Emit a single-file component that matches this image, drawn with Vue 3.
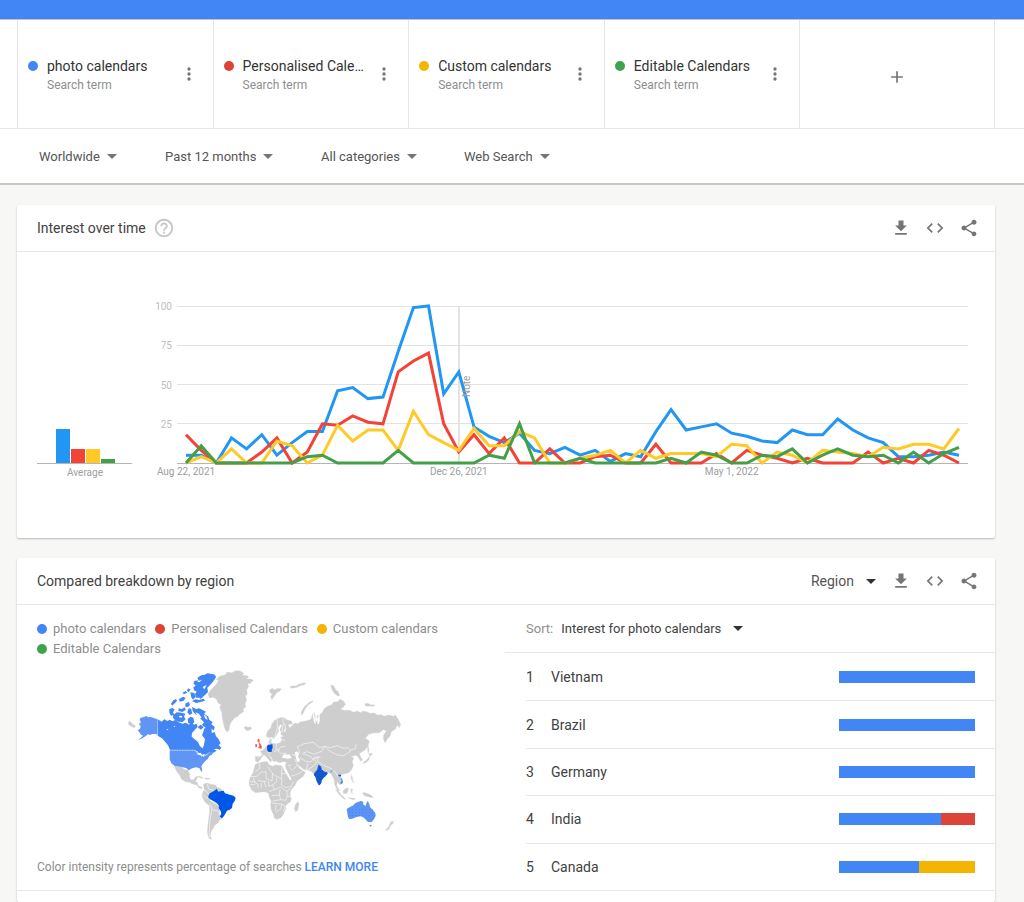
<script setup>
const terms = [
  { name: 'photo calendars', color: '#4285f4' },
  { name: 'Personalised Calendars', short: 'Personalised Cale…', color: '#db4437' },
  { name: 'Custom calendars', color: '#f4b400' },
  { name: 'Editable Calendars', color: '#3fa34d' }
]

const filters = [
  { label: 'Location', options: ['Worldwide', 'United States', 'India'] },
  { label: 'Time range', options: ['Past 12 months', 'Past 30 days', 'Past 5 years'] },
  { label: 'Category', options: ['All categories', 'Shopping', 'Travel'] },
  { label: 'Search type', options: ['Web Search', 'Image Search', 'News Search'] }
]

const baseline = 210
const unit = 157 / 100
const startX = 169
const weekStep = 773 / 51

const series = [
  { color: '#2196f3', values: [5, 5, 0, 16, 9, 18, 5, 13, 20, 20, 46, 48, 41, 42, 71, 99, 100, 44, 58, 23, 17, 13, 19, 8, 6, 10, 5, 8, 1, 6, 4, 20, 34, 21, 23, 25, 19, 17, 14, 13, 21, 18, 18, 28, 21, 16, 13, 4, 4, 5, 7, 5] },
  { color: '#f44336', values: [18, 8, 0, 0, 0, 7, 16, 0, 7, 25, 24, 30, 26, 25, 58, 65, 70, 25, 7, 18, 6, 16, 0, 0, 9, 0, 0, 4, 5, 0, 0, 12, 0, 0, 0, 6, 0, 8, 5, 3, 0, 3, 0, 0, 0, 7, 0, 3, 0, 8, 5, 0] },
  { color: '#ffca28', values: [0, 4, 0, 9, 0, 0, 14, 11, 0, 5, 24, 14, 21, 21, 8, 33, 18, 13, 8, 22, 11, 11, 20, 16, 0, 0, 3, 5, 8, 0, 8, 3, 6, 6, 6, 4, 12, 11, 0, 7, 5, 0, 8, 7, 6, 4, 10, 9, 12, 12, 9, 22] },
  { color: '#43a047', values: [0, 11, 0, 0, 0, 0, 0, 0, 4, 5, 0, 0, 0, 0, 8, 0, 0, 0, 0, 0, 5, 3, 25, 0, 0, 0, 3, 0, 0, 0, 0, 0, 3, 0, 7, 5, 0, 0, 5, 4, 9, 0, 5, 9, 5, 4, 5, 0, 7, 0, 6, 10] }
]

const linePoints = (values) =>
  values.map((v, i) => `${(startX + i * weekStep).toFixed(1)},${(baseline - v * unit).toFixed(1)}`).join(' ')

const gridValues = [25, 50, 75, 100]
const averages = [34, 14, 14, 4]
const dateTicks = [
  { week: 0, text: 'Aug 22, 2021' },
  { week: 18, text: 'Dec 26, 2021' },
  { week: 36, text: 'May 1, 2022' }
]

const regions = [
  { name: 'Vietnam', parts: [{ c: '#4285f4', w: 100 }] },
  { name: 'Brazil', parts: [{ c: '#4285f4', w: 100 }] },
  { name: 'Germany', parts: [{ c: '#4285f4', w: 100 }] },
  { name: 'India', parts: [{ c: '#4285f4', w: 75 }, { c: '#db4437', w: 25 }] },
  { name: 'Canada', parts: [{ c: '#4285f4', w: 59 }, { c: '#f4b400', w: 41 }] }
]

const actions = [
  { label: 'Download CSV', d: 'M19 9h-4V3H9v6H5l7 7 7-7zM5 18v2h14v-2H5z' },
  { label: 'Embed', d: 'M9.4 16.6L4.8 12l4.6-4.6L8 6l-6 6 6 6 1.4-1.4zm5.2 0l4.6-4.6-4.6-4.6L16 6l6 6-6 6-1.4-1.4z' },
  { label: 'Share', d: 'M18 16.08c-.76 0-1.44.3-1.96.77L8.91 12.7c.05-.23.09-.46.09-.7s-.04-.47-.09-.7l7.05-4.11c.54.5 1.25.81 2.04.81 1.66 0 3-1.34 3-3s-1.34-3-3-3-3 1.34-3 3c0 .24.04.47.09.7L8.04 9.81C7.5 9.31 6.79 9 6 9c-1.66 0-3 1.34-3 3s1.34 3 3 3c.79 0 1.5-.31 2.04-.81l7.12 4.16c-.05.21-.08.43-.08.65 0 1.61 1.31 2.92 2.92 2.92 1.61 0 2.92-1.31 2.92-2.92s-1.31-2.92-2.92-2.92z' }
]

const land = {
  greenland: 'M264 105l10-14 14-14 8-14-8-2 12-10 16-4 6-8 14 2 10-6 12 0 8 4 6 5-6 4 16 2 4 5-8 5 14 0 8 4-8 8-9 3 3 8-6 10 2 12-6 6 4 12-5 12 3 8-9 8 3 6-12 8-8 8-8 3-8 10-6 10-3 16-4 7-6-4-5-14-4-18-2-12-1-12-6-14 4-8-10-6-3-10-10-6-12 2z',
  iceland: 'M373 204l5-2 4 3 10-1 3 4-5 5-8 2-7-4z',
  mexico: 'M163 322l22 2 8 8 10 0 6 14 0 10 4 6 8 0 5-8 6 0-3 10-4 5 7 0 2 10 8 5 6 2-4 3-8-3-6-8-14-4-8-4-12-2-12-8-4-10-10-13-4-8zM227 353l13-1 10 5-3 1-10-3zM253 357l15 1 2 3-12 0z',
  southAmerica: 'M250 375l12-3 10 4 14 2 5 7 12 4 4 5-6 8-20 6-14 8 4 10 20 8 8 22-2 12 12 3-4 10-7 3-4 8-10 7-4 8-6 8-2 7-1 10 4 9-7-2-4-9-2-12 2-20 2-20 3-20-1-18-14-12-8-17 2-10 5-10z',
  africa: 'M406 316l12-5 14-3 12 0 1 8 12 6 9-4 20 2 7 16 10 16 7 12 16-3 6 3-7 15-12 14-3 12 4 14-2 8-14 12-1 12-8 16-6 9-12 5-7-3-4-12-7-15-1-16 2-8-6-12-2-12-10-4-12 0-18 2-10-7-8-14-1-12 4-14 8-12z',
  madagascar: 'M534 428l3 6-4 20-6 4-4-8 3-13z',
  eurasia: 'M406 292L424 292 426 284 420 277 429 274 436 266 444 256 450 256 446 248 452 246 456 253 470 254 482 250 486 242 482 234 492 232 484 228 482 222 490 216 496 220 498 206 494 192 500 182 514 186 518 194 504 197 509 206 518 198 524 192 534 194 540 189 552 187 566 184 574 179 576 168 582 160 586 172 585 184 592 190 594 180 590 170 598 168 607 160 612 150 622 142 634 138 640 130 656 127 658 121 666 123 673 129 676 137 668 146 660 150 672 154 690 154 700 160 712 156 722 161 728 156 740 158 750 163 762 162 772 168 784 167 792 172 806 168 820 172 826 168 834 180 842 196 838 206 832 198 826 210 814 218 810 232 802 240 795 251 790 240 791 228 800 215 790 212 778 221 760 222 746 226 736 238 748 246 744 262 734 274 724 280 718 284 722 294 728 303 722 307 716 296 708 288 700 292 692 290 701 298 697 308 700 320 694 334 684 342 674 344 664 347 660 353 668 363 668 374 659 377 652 367 650 380 660 396 652 392 644 377 642 360 634 346 628 340 618 344 608 352 602 366 596 376 590 366 584 350 577 340 568 334 552 332 542 324 530 318 540 329 549 335 556 340 550 352 534 364 520 371 514 360 506 344 498 328 496 318 500 310 490 308 478 311 468 306 460 308 455 296 446 288 440 283 448 292 456 302 452 310 442 297 433 288 426 293 420 303 413 310 406 307z',
  scandinavia: 'M439 228L443 216 452 208 456 194 464 184 476 178 487 175 497 179 500 186 492 195 496 206 491 216 482 218 480 210 486 200 481 196 474 207 476 216 470 228 461 240 456 234 448 236 441 234zM449 240L454 239 454 246 449 248z',
  arctic: 'M448 92l10-4 4 5 12-5 10 2-5 7-8 3-8 12-7 10-4-8 4-8-6-6zM543 167l2-11 9-14 14-12 10-5 1 3-15 10-9 13-7 15zM510 83l8-3 10 2 8-6 10-3 12-1-5 5-13 3-8 5-9 1-9 2zM632 78l9 2 6 12 8 6 4 12-6 1-10-8-7-11zM733 135l10-2 9 4 13 1-3 4-12-1-11 1zM25 190l5-3 6 6 10 8-2 6-11-5-7-5z',
  asiaIslands: 'M646 391l7 3 11 13 11 11 1 4-7-4-12-12zM670 395l10-9 6 3-2 7-5 9-10-3zM692 389l6 2-2 7 2 8-4-6zM683 416l14 1 10 3-8 2zM730 400l11 3 13 6 6 7-8-1-8-2-11-3-5-6zM694 347l3 8 2 12 5 4-6-3-5-10zM742 257l4 9 1 18-4-9zM747 285l8-3 2 5-8 5zM748 292l0 8-7 9-11 5 0-4 10-7zM812 488l9-1-3 8-6 4-4 9-7 7-4-3 9-9z'
}
const borders = 'M388 352l20 1 16-14 14-1M418 311l2 16-14 12M438 338l0 20 18 8 2-22-14-20M456 344l28 16 2-40M400 356l4 14 10 6 0 12M414 364l18 4 8-2M424 372l0 16M432 368l6 16M446 366l0 16 12-4 12-10 0-10M484 344l22 0M486 360l-2 18 14 8 16-4 6-14M458 378l4 14-14 6M462 392l22-8M480 392l-2 16-22 2M484 386l16 10 14-8M500 396l2 14 14 6M478 408l4 14-24 4M482 422l16 2 4-14M456 432l30 4 10 6 14-3M468 438l-2 18M486 436l-4 14-14 10M496 442l-6 14 8 6M388 368l18 0M391 377l14-1M496 262l-14 2-8 12 10 8 12-2 12 10M454 262l0 18M440 276l12 10M470 250l-2 20 10 4M462 278l10-4M424 284l10 8M410 293l10 2M471 180l2 22-5 20-6 16M488 177l2 18-4 24M486 232l-10 4M484 244l-14 0M480 240l16 4M516 286l12 4 12-10-8-16 20-10 28-4 18 16 16-4M614 262l-8 14-24 10-20-8-12 4M614 262l14 14 24 12 20 2 20-14-8-10-14 2-18-8-20 6zM692 272l14-2 2-14M548 284l22 8 18 16M540 296l18 12 16 0 8-12 14-4M524 300l8 16-10 14M532 316l18 16M564 312l-6 22M560 334l22-14 10-12M596 292l-4 14M592 306l20 14 24 10M508 326l12 10M512 352l20-6 16-10M636 334l10 4 6 14M504 320l10-2M582 300l20-6'

const indiaShape = 'M596 319l6 4 2 9 9 7 9 3-5 8-8 7-5 8-2 9-5 4-6-12-3-12-5-6 2-7 8-9z'
const dots = Array.from({ length: 24 }, (_, n) => ({ x: 688 + (n % 8) * 10, y: 452 + Math.floor(n / 8) * 9 }))
</script>

<template>
  <div class="page">
    <div class="topbar"></div>

    <header class="query">
      <div class="terms">
        <div v-for="t in terms" :key="t.name" class="term">
          <span class="dot term-dot" :style="{ background: t.color }"></span>
          <div class="term-text">
            <div class="term-name" :title="t.name">{{ t.short || t.name }}</div>
            <div class="term-type">Search term</div>
          </div>
          <button class="icon-button" type="button" :aria-label="'Options for ' + t.name">
            <svg class="icon" viewBox="0 0 24 24"><circle cx="12" cy="6" r="2" /><circle cx="12" cy="12" r="2" /><circle cx="12" cy="18" r="2" /></svg>
          </button>
        </div>
        <div class="term add">
          <button class="icon-button" type="button" aria-label="Add comparison">
            <svg class="icon" viewBox="0 0 24 24"><path d="M19 13h-6v6h-2v-6H5v-2h6V5h2v6h6v2z" /></svg>
          </button>
        </div>
      </div>
      <div class="filters">
        <div v-for="f in filters" :key="f.label" class="dropdown">
          <select :aria-label="f.label">
            <option v-for="o in f.options" :key="o">{{ o }}</option>
          </select>
          <svg class="caret" viewBox="0 0 10 5"><path d="M0 0h10L5 5z" /></svg>
        </div>
      </div>
    </header>

    <main class="content">
      <section class="card">
        <div class="card-head">
          <h2>Interest over time</h2>
          <button class="help" type="button" aria-label="Help">
            <svg viewBox="0 0 24 24"><path d="M11 18h2v-2h-2v2zm1-16C6.48 2 2 6.48 2 12s4.48 10 10 10 10-4.48 10-10S17.52 2 12 2zm0 18c-4.41 0-8-3.59-8-8s3.59-8 8-8 8 3.59 8 8-3.59 8-8 8zm0-14c-2.21 0-4 1.79-4 4h2c0-1.1.9-2 2-2s2 .9 2 2c0 2-3 1.75-3 5h2c0-2.25 3-2.5 3-5 0-2.21-1.79-4-4-4z" /></svg>
          </button>
          <div class="actions">
            <button v-for="a in actions" :key="a.label" class="action" type="button" :aria-label="a.label">
              <svg class="icon" viewBox="0 0 24 24"><path :d="a.d" /></svg>
            </button>
          </div>
        </div>
        <svg class="chart" viewBox="0 -1 978 286" role="img" aria-label="Interest over time">
          <rect v-for="(h, i) in averages" :key="'a' + i" :x="39 + i * 15" :y="baseline - h" width="14" :height="h" :fill="series[i].color" />
          <path class="axis" d="M20 210.5H115" />
          <text x="68" y="223" text-anchor="middle">Average</text>
          <g v-for="g in gridValues" :key="g">
            <path class="grid" :d="`M160 ${Math.floor(baseline - g * unit) + 0.5}H951`" />
            <text class="tick" x="155" :y="baseline - g * unit + 4" text-anchor="end">{{ g }}</text>
          </g>
          <path class="axis" d="M160 210.5H951" />
          <path class="note-line" d="M442 53V210" />
          <polyline v-for="s in series" :key="s.color" :points="linePoints(s.values)" :stroke="s.color" class="line" />
          <text transform="translate(453 144) rotate(-90)">Note</text>
          <text v-for="d in dateTicks" :key="d.text" :x="startX + d.week * weekStep" y="222" text-anchor="middle">{{ d.text }}</text>
        </svg>
      </section>

      <section class="card last">
        <div class="card-head">
          <h2>Compared breakdown by region</h2>
          <div class="actions">
            <div class="dropdown region">
              <select aria-label="Resolution">
                <option>Region</option>
                <option>City</option>
              </select>
              <svg class="caret" viewBox="0 0 10 5"><path d="M0 0h10L5 5z" /></svg>
            </div>
            <button v-for="a in actions" :key="a.label" class="action" type="button" :aria-label="a.label">
              <svg class="icon" viewBox="0 0 24 24"><path :d="a.d" /></svg>
            </button>
          </div>
        </div>
        <div class="breakdown">
          <div class="map-pane">
            <ul class="legend">
              <li v-for="t in terms" :key="t.name"><span class="dot" :style="{ background: t.color }"></span>{{ t.name }}</li>
            </ul>
            <svg class="map" viewBox="-24 0 894 570" role="img" aria-label="World map of interest by region">
              <defs>
                <pattern id="dots" width="8" height="8" patternUnits="userSpaceOnUse">
                  <circle cx="2" cy="2" r="2" fill="#063a9e" /><circle cx="6" cy="6" r="2" fill="#063a9e" />
                </pattern>
              </defs>
              <g fill="#cdcecd" stroke="#d5d6d5" stroke-width="1">
                <path v-for="(d, k) in land" :key="k" :d="d" />
              </g>
              <g fill="#fff">
                <path d="M486 296l3-9 7-2 5 3 7-2 3 4 4 7-12 2-8-1zM524 280l8-3 5 8-3 8 6 9-3 8-7-4-3-13z" />
                <path d="M578 170l4-12 2 20 4 16-5-2zM596 166l3 1 0 22-5 8-2-5z" />
              </g>
              <path :d="borders" fill="none" stroke="#f7f7f7" stroke-width="2" />
              <path d="M247 392l12 4 8 10M262 374l4 16 14 4M250 408l10 10 8-6M272 422l8 10 14 4M270 434l6 18 18 4 8 14M276 452l-6 30-2 34-1 20M300 472l4 10" fill="none" stroke="#f7f7f7" stroke-width="2" />

              <path fill="#5f96f5" d="M113 181l-10-3-10-4-8 1-6-4-10 4-7 1-3 6 4 8-6 5 5 6-2 8-7 5 5 6 5 7 6 3-8 8-7 6 13-6 10-7 8-6 3 3 10-3 9 0 6 2z" />
              <path fill="#5f96f5" d="M149 274L222 274 232 279 240 282 244 294 256 290 266 283 272 276 280 278 276 287 268 291 264 299 256 306 249 314 244 322 247 334 244 339 239 328 228 325 216 328 206 334 200 328 186 324 164 321 154 313 149 301z" />
              <path fill="#4285f4" d="M113 181L125 188 133 181 142 186 150 182 156 187 166 183 176 190 188 194 198 191 207 197 216 190 222 197 230 194 233 203 224 213 216 222 215 233 224 241 234 249 240 262 248 268 251 261 253 252 255 240 246 229 250 218 253 208 262 207 272 212 276 222 284 219 288 232 296 241 302 253 296 258 304 266 300 272 290 269 281 271 290 275 280 281 270 278 264 283 254 289 246 296 242 285 232 277 222 273 150 273 144 259 134 247 126 238 113 230z" />
              <path fill="#4285f4" d="M148 150l9-3 7 4-5 9 4 7-10 3-5-9zM160 168l10-8 14 1 12 3-4 9 5 8-9 8-13-1-9-4-7-7zM176 148l9 2 10-5 2 8-10 6-12-3zM153 134l7-10 8-4 3 6-9 9-5 5zM177 120l12-7 8 4-6 8-12 3zM197 133l10-4 3 8-7 8-8-3zM206 148l7 1 4 14-8 5-7-8zM203 180l9-7 8 3 3 13-8 7-10-3z" />
              <path fill="#4285f4" d="M216 144L228 150 238 148 246 152 258 158 252 164 264 172 268 182 278 190 274 195 284 204 282 214 274 210 276 218 264 212 254 204 246 198 252 190 242 180 236 170 226 166 218 156zM233 205l9-8 9 7-8 8zM211 100l12 2 4 11-8 9-5-7zM216 126l11-5 10 2 14-4 4 6-13 4-14 3z" />
              <path fill="#4285f4" d="M223 66l11-2-2 9 10 2 3 15 10-8-3 17-9 17-15 0-3-11 5-7-8-4-2-9 7-5-7-7zM232 56l12-7 10-2 8-4 14 2 9 2 3 8-9 13-8 9-9 9 2 13-12 12-11 9-7-8 7-14-10-10-3-16 9-5zM188 101l9-5 5 5-11 5zM204 88l8 4-6 7-5-4z" />
              <g fill="#fff">
                <path d="M232 67l14-5-8 8zM248 84l12-6-7 13zM226 160l11 4 8 12-4 2-9-8zM251 167l8 4 4 11-7-3zM178 170l9 1-2 5-8-2zM160 203l4-3 1 4zM139 211l7 0-4 3zM228 280l6 3 7-2 6 6 6-2 2 3-5 5-8-4-8-2z" />
              </g>
              <path d="M113 181v50M151 273h72l11 10 12 3" fill="none" stroke="#d9e6fd" stroke-width="2" stroke-dasharray="3 2" />

              <path fill="#0057e7" d="M269 403l9-5 7-4 5-5 5 9 9-2 7-1 4 8 14 4 12 3 6 7-3 9-6 8-2 13-7 5-8 3-5 9-4 7-6 7-7-5 5-9-2-8-6-8 0-9-7-8-13-7-6-3-6-7z" />
              <path fill="#0057e7" d="M441 262l4-5 5 0 7-2 1 12-3 5 1 6-9 1-5-3z" />
              <path fill="#f05f52" d="M406 255l5 1 0 8-5 1zM414 239l4 1 1 7-2 3 5 5 4 9-2 5-10-2 4-7-2-9-4-4z" />
              <path fill="#1a66ea" stroke="#1a66ea" stroke-width="3" :d="indiaShape" />
              <path fill="url(#dots)" :d="indiaShape" />
              <path fill="#8ab4f8" d="M629 337l8-4 3 4-9 6z" />
              <path fill="#0057e7" d="M655 347l8 0 0 4-3 2-5-3z" />
              <path fill="#4285f4" d="M661 353l5 7 3 9-5 6-4-2 5-7z" />
              <path fill="#5b94f5" d="M680 450l10-6 10-5 6-7 8-3 8-3 8 2-1 8 8 5 3-10 3-6 5 10 2 9 8 8 8 10 1 9-5 10-7 8-11 0-8-8-4-5-10-4-13 2-12 5-10 1-3-6zM748 498l8 0-4 6z" />
              <circle v-for="(d, n) in dots" :key="n" :cx="d.x" :cy="d.y" r="1" fill="#3768c2" />
            </svg>
            <p class="caption">Color intensity represents percentage of searches <a href="#">LEARN MORE</a></p>
          </div>
          <div class="rank-pane">
            <div class="sort">
              <label for="sort">Sort:</label>
              <div class="dropdown dark">
                <select id="sort">
                  <option v-for="t in terms" :key="t.name">Interest for {{ t.name }}</option>
                </select>
                <svg class="caret" viewBox="0 0 10 5"><path d="M0 0h10L5 5z" /></svg>
              </div>
            </div>
            <ol class="ranks">
              <li v-for="(r, i) in regions" :key="r.name">
                <span class="rank">{{ i + 1 }}</span>
                <span class="place">{{ r.name }}</span>
                <span class="bar"><span v-for="p in r.parts" :key="p.c" :style="{ width: p.w + '%', background: p.c }"></span></span>
              </li>
            </ol>
          </div>
        </div>
      </section>
    </main>
  </div>
</template>

<style>
body {
  background: #f7f7f6;
}
</style>

<style scoped>
* {
  box-sizing: border-box;
}
.page {
  display: flex;
  flex-direction: column;
  min-height: 100vh;
  font-family: Roboto, "Liberation Sans", sans-serif;
  font-size: 13px;
  color: #424242;
}
button {
  display: flex;
  align-items: center;
  justify-content: center;
  padding: 0;
  border: 0;
  background: none;
}
.topbar {
  height: 19px;
  background: #4285f4;
}
.query {
  background: #fff;
  border-top: 1px solid #c2c4c8;
  border-bottom: 2px solid #c6c8c7;
}
.terms {
  display: grid;
  grid-template-columns: repeat(5, 1fr);
  height: 109px;
  padding: 0 29px 0 17px;
  border-bottom: 1px solid #e6e6e6;
}
.term {
  display: flex;
  align-items: center;
  min-width: 0;
  padding: 0 8px 0 10px;
  border-left: 1px solid #e6e6e6;
}
.term.add {
  justify-content: center;
  padding: 5px 0 0;
  border-right: 1px solid #e6e6e6;
}
.dot {
  flex: none;
  width: 10px;
  height: 10px;
  border-radius: 50%;
}
.term-dot {
  margin: 0 9px 16px 0;
}
.term-text {
  flex: 1;
  min-width: 0;
  padding-top: 2px;
}
.term-name {
  overflow: hidden;
  font-size: 14px;
  line-height: 20px;
  color: #333;
  white-space: nowrap;
  text-overflow: ellipsis;
}
.term-type {
  font-size: 12px;
  line-height: 18px;
  color: #8e8e8e;
}
.icon-button {
  width: 32px;
  height: 32px;
}
.icon {
  width: 20px;
  height: 20px;
  fill: #757575;
}
.filters {
  display: grid;
  grid-template-columns: 126px 156px 143px auto;
  align-items: center;
  height: 54px;
  padding: 1px 0 0 39px;
}
.dropdown {
  display: flex;
  align-items: center;
  gap: 7px;
}
.dropdown select {
  appearance: none;
  field-sizing: content;
  padding: 0;
  border: 0;
  background: none;
  font: inherit;
  line-height: 20px;
  color: #555;
}
.caret {
  width: 10px;
  height: 5px;
  fill: #757575;
}
.content {
  display: flex;
  flex: 1;
  flex-direction: column;
  gap: 20px;
  padding: 20px 29px 0 17px;
}
.card {
  background: #fff;
  border-radius: 2px;
  box-shadow: 0 1px 2px rgba(0, 0, 0, 0.25);
}
.card.last {
  flex: 1;
}
.card-head {
  display: flex;
  align-items: center;
  height: 47px;
  padding: 0 9px 0 20px;
  border-bottom: 1px solid #e8e8e8;
}
.card-head h2 {
  margin: 0;
  font-size: 14px;
  font-weight: 400;
  line-height: 20px;
}
.help {
  width: 22px;
  height: 22px;
  margin-left: 7px;
}
.help svg {
  width: 22px;
  height: 22px;
  fill: #c6c6c6;
}
.actions {
  display: flex;
  margin-left: auto;
}
.action {
  width: 34px;
  height: 34px;
}
.region {
  gap: 12px;
  margin-right: 8px;
  font-size: 14px;
}
.region .caret,
.dark .caret {
  fill: #333;
}
.chart {
  display: block;
  width: 100%;
}
.chart text {
  font-size: 10px;
  fill: #9e9e9e;
}
.chart .tick {
  fill: #bdbdbd;
}
.axis {
  stroke: #b5b5b5;
}
.grid {
  stroke: #e3e3e3;
}
.note-line {
  stroke: #e3e3e3;
  stroke-width: 2;
}
.line {
  fill: none;
  stroke-width: 3;
}
.breakdown {
  display: grid;
  grid-template-columns: 488fr 490fr;
  min-height: 286px;
  border-bottom: 1px solid #e8e8e8;
}
.map-pane {
  display: flex;
  flex-direction: column;
  padding: 14px 20px 0;
}
.legend {
  display: flex;
  flex-wrap: wrap;
  gap: 0 9px;
  margin: 0;
  padding: 0;
  list-style: none;
  line-height: 20px;
  color: #8e8e8e;
}
.legend li {
  display: flex;
  align-items: center;
  gap: 6px;
}
.map {
  align-self: center;
  width: 298px;
  max-width: 100%;
}
.caption {
  margin: 8px 0 0;
  font-size: 12px;
  line-height: 20px;
  color: #8e8e8e;
}
.caption a {
  font-weight: 500;
  color: #4285f4;
  text-decoration: none;
}
.rank-pane {
  display: flex;
  flex-direction: column;
}
.sort {
  display: flex;
  align-items: center;
  gap: 8px;
  height: 48px;
  padding-left: 21px;
  border-bottom: 1px solid #e8e8e8;
  color: #8e8e8e;
}
.dark {
  gap: 12px;
}
.dark select {
  color: #424242;
}
.ranks {
  display: grid;
  flex: 1;
  grid-auto-rows: 1fr;
  margin: 0 0 0 21px;
  padding: 0;
  list-style: none;
  font-size: 14px;
}
.ranks li {
  display: flex;
  align-items: center;
  padding-right: 20px;
}
.ranks li + li {
  border-top: 1px solid #e8e8e8;
}
.rank {
  width: 25px;
}
.bar {
  display: flex;
  width: 136px;
  height: 12px;
  margin-left: auto;
}
</style>
